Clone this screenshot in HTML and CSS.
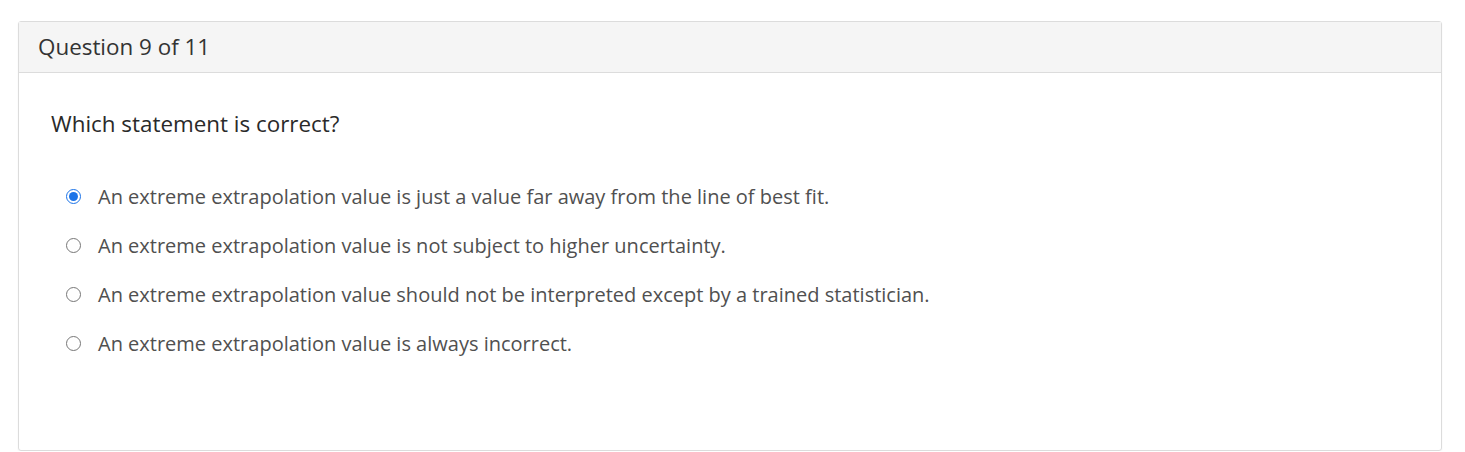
FILE: index.html
```html
<!DOCTYPE html>
<html lang="en">
<head>
  <meta charset="UTF-8" />
  <title>Question 9 of 11</title>
  <link rel="stylesheet" href="styles.css">
</head>
<body>
  <div class="card">
    <div class="card-header">Question 9 of 11</div>
    <div class="card-body">
      <p class="question">Which statement is correct?</p>
      <ul class="options">
        <li><label><input type="radio" name="q9" checked> An extreme extrapolation value is just a value far away from the line of best fit.</label></li>
        <li><label><input type="radio" name="q9"> An extreme extrapolation value is not subject to higher uncertainty.</label></li>
        <li><label><input type="radio" name="q9"> An extreme extrapolation value should not be interpreted except by a trained statistician.</label></li>
        <li><label><input type="radio" name="q9"> An extreme extrapolation value is always incorrect.</label></li>
      </ul>
    </div>
  </div>
</body>
</html>
```
FILE: styles.css
```css
body {
  font-family: "Open Sans", Arial, sans-serif;
  background: #fff;
  margin: 0;
  padding: 21px 23px 0 18px;
}
.card {
  border: 1px solid #dcdcdc;
  border-radius: 3px;
  height: 430px;
  box-sizing: border-box;
  box-shadow: 0 1px 2px rgba(0,0,0,0.06);
}
.card-header {
  background: #f5f5f5;
  border-bottom: 1px solid #dcdcdc;
  height: 51px;
  box-sizing: border-box;
  padding: 0 19px;
  line-height: 50px;
  font-size: 22.4px;
  color: #333;
}
.card-body {
  padding: 36px 32px;
}
.question {
  margin: 0 0 44px;
  font-size: 22.4px;
  line-height: 30px;
  color: #2a2a2a;
}
.options {
  list-style: none;
  margin: 0;
  padding: 0 0 0 15px;
}
.options li {
  height: 49px;
  font-size: 20px;
  color: #505050;
}
.options label {
  display: flex;
  align-items: center;
  gap: 17px;
  line-height: 27px;
}
.options input {
  margin: 0;
  width: 15px;
  height: 15px;
  accent-color: #1a73e8;
}
```
